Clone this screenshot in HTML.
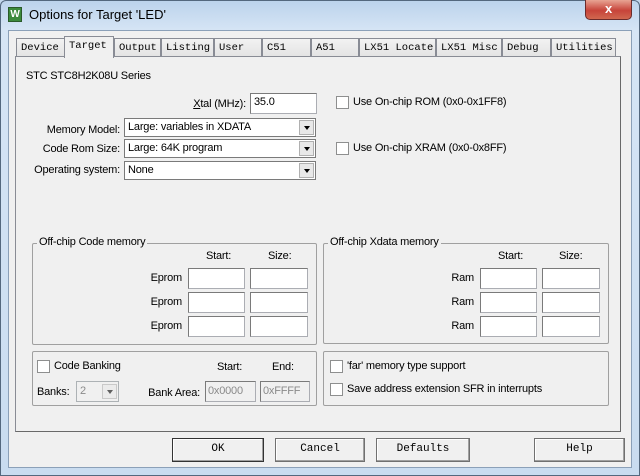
<!DOCTYPE html>
<html><head><meta charset="utf-8"><style>
*{box-sizing:border-box;margin:0;padding:0}
body{width:640px;height:476px;overflow:hidden;font-family:"Liberation Sans",Arial,sans-serif;font-size:11px;letter-spacing:-0.2px;color:#000;position:relative;background:#c4d8ee}
.a{position:absolute}
.frame{left:0;top:0;width:640px;height:476px;background:linear-gradient(#bcd3ec,#d6e5f5 30px,#c9dcf0);border:1px solid #54687e;border-radius:6px 6px 0 0}
.client{left:8px;top:30px;width:624px;height:438px;background:#f0f0f0;border:1px solid #8ba0b8}
.t{position:absolute;white-space:nowrap}
.r{position:absolute;white-space:nowrap;text-align:right}
.tab{position:absolute;top:38px;height:19px;border:1px solid #898c95;border-bottom:none;background:linear-gradient(#f2f2f2,#e3e3e3);font-family:"Liberation Mono",monospace;font-size:10.5px;letter-spacing:0;padding:3px 0 0 4px;white-space:nowrap;overflow:hidden}
.panel{left:15px;top:56px;width:606px;height:376px;border:1px solid #898c95;border-right-color:#696969;border-bottom-color:#696969;background:#f0f0f0}
.in{position:absolute;background:#fff;border:1px solid #abadb3;border-top-color:#7a7a7a;border-left-color:#7a7a7a;height:21px}
.sel{position:absolute;background:#fff;border:1px solid #7a7a7a;height:19px;padding:2px 0 0 3px}
.sel .b{position:absolute;right:1px;top:1px;width:15px;height:15px;background:#e8e8e8;border:1px solid #b0b0b0}
.sel .b:after{content:"";position:absolute;left:4px;top:5px;border-left:3px solid transparent;border-right:3px solid transparent;border-top:4px solid #000}
.cb{position:absolute;width:13px;height:13px;border:1px solid #8e8f8f;background:#fff}
.grp{position:absolute;border:1px solid #a0a0a0;border-radius:2px}
.gt{position:absolute;background:#f0f0f0;padding:0 2px;top:-8px;left:4px;white-space:nowrap}
.btn{position:absolute;top:438px;height:24px;border:1px solid #707070;box-shadow:inset -1px -1px 0 #a0a0a0,inset 1px 1px 0 #fff;background:#f0f0f0;font-family:"Liberation Mono",monospace;font-size:11px;letter-spacing:0;text-align:center;line-height:21px}
</style></head><body>
<div class="a frame"></div>
<div class="a" style="left:585px;top:0;width:47px;height:20px;border:1px solid #6a2b2b;border-top:none;border-radius:0 0 5px 5px;background:linear-gradient(#e8a493,#c7443a 55%,#d0674f);color:#fff;font-weight:bold;text-align:center;font-size:13px;line-height:17px">x</div>
<div class="a" style="left:8px;top:7px;width:14px;height:15px;background:#3c8a3c;border:1px solid #2a5a2a;color:#fff;font-size:10px;font-weight:bold;line-height:13px;text-align:center">W</div>
<div class="t" style="left:29px;top:7px;font-size:13px;letter-spacing:0">Options for Target 'LED'</div>
<div class="a client"></div>

<div class="tab" style="left:16px;width:49px">Device</div>
<div class="tab" style="left:114px;width:47px">Output</div>
<div class="tab" style="left:161px;width:53px">Listing</div>
<div class="tab" style="left:214px;width:48px">User</div>
<div class="tab" style="left:262px;width:49px">C51</div>
<div class="tab" style="left:311px;width:48px">A51</div>
<div class="tab" style="left:359px;width:77px">LX51 Locate</div>
<div class="tab" style="left:436px;width:66px">LX51 Misc</div>
<div class="tab" style="left:502px;width:49px">Debug</div>
<div class="tab" style="left:551px;width:65px">Utilities</div>
<div class="a panel"></div>
<div class="tab" style="left:64px;top:36px;width:50px;height:22px;background:#f0f0f0;z-index:2;padding-top:3px">Target</div>

<div class="t" style="left:26px;top:70px">STC STC8H2K08U Series</div>
<div class="r" style="right:394px;top:98px"><u>X</u>tal (MHz):</div>
<div class="in" style="left:250px;top:93px;width:67px;padding:2px 3px">35.0</div>
<div class="r" style="right:520px;top:124px">Memory Model:</div>
<div class="sel" style="left:124px;top:118px;width:192px">Large: variables in XDATA<div class="b"></div></div>
<div class="r" style="right:520px;top:143px">Code Rom Size:</div>
<div class="sel" style="left:124px;top:139px;width:192px">Large: 64K program<div class="b"></div></div>
<div class="r" style="right:520px;top:164px">Operating system:</div>
<div class="sel" style="left:124px;top:161px;width:192px">None<div class="b"></div></div>

<div class="cb" style="left:336px;top:96px"></div>
<div class="t" style="left:353px;top:96px">Use On-chip ROM (0x0-0x1FF8)</div>
<div class="cb" style="left:336px;top:142px"></div>
<div class="t" style="left:353px;top:142px">Use On-chip XRAM (0x0-0x8FF)</div>

<div class="grp" style="left:32px;top:243px;width:285px;height:102px"><div class="gt">Off-chip Code memory</div></div>
<div class="t" style="left:206px;top:250px">Start:</div>
<div class="t" style="left:268px;top:250px">Size:</div>
<div class="r" style="right:458px;top:272px">Eprom</div>
<div class="r" style="right:458px;top:296px">Eprom</div>
<div class="r" style="right:458px;top:320px">Eprom</div>
<div class="in" style="left:188px;top:268px;width:57px"></div>
<div class="in" style="left:250px;top:268px;width:58px"></div>
<div class="in" style="left:188px;top:292px;width:57px"></div>
<div class="in" style="left:250px;top:292px;width:58px"></div>
<div class="in" style="left:188px;top:316px;width:57px"></div>
<div class="in" style="left:250px;top:316px;width:58px"></div>

<div class="grp" style="left:323px;top:243px;width:286px;height:101px"><div class="gt">Off-chip Xdata memory</div></div>
<div class="t" style="left:498px;top:250px">Start:</div>
<div class="t" style="left:559px;top:250px">Size:</div>
<div class="r" style="right:166px;top:272px">Ram</div>
<div class="r" style="right:166px;top:296px">Ram</div>
<div class="r" style="right:166px;top:320px">Ram</div>
<div class="in" style="left:480px;top:268px;width:57px"></div>
<div class="in" style="left:542px;top:268px;width:58px"></div>
<div class="in" style="left:480px;top:292px;width:57px"></div>
<div class="in" style="left:542px;top:292px;width:58px"></div>
<div class="in" style="left:480px;top:316px;width:57px"></div>
<div class="in" style="left:542px;top:316px;width:58px"></div>

<div class="grp" style="left:32px;top:351px;width:285px;height:55px"></div>
<div class="cb" style="left:37px;top:360px"></div>
<div class="t" style="left:54px;top:360px">Code Banking</div>
<div class="t" style="left:217px;top:361px">Start:</div>
<div class="t" style="left:272px;top:361px">End:</div>
<div class="t" style="left:37px;top:386px">Banks:</div>
<div class="sel" style="left:76px;top:381px;width:43px;height:21px;background:#f0f0f0;border-color:#adb2b5;color:#8a8a8a;padding-top:3px">2<div class="b" style="top:2px;opacity:.6"></div></div>
<div class="r" style="right:440px;top:387px">Bank Area:</div>
<div class="in" style="left:205px;top:381px;width:51px;background:#f0f0f0;color:#8a8a8a;padding:3px 2px">0x0000</div>
<div class="in" style="left:260px;top:381px;width:50px;background:#f0f0f0;color:#8a8a8a;padding:3px 2px">0xFFFF</div>

<div class="grp" style="left:323px;top:351px;width:286px;height:55px"></div>
<div class="cb" style="left:330px;top:360px"></div>
<div class="t" style="left:347px;top:360px">'far' memory type support</div>
<div class="cb" style="left:330px;top:383px"></div>
<div class="t" style="left:347px;top:383px">Save address extension SFR in interrupts</div>

<div class="btn" style="left:172px;width:92px;border-color:#333">OK</div>
<div class="btn" style="left:275px;width:90px">Cancel</div>
<div class="btn" style="left:376px;width:94px">Defaults</div>
<div class="btn" style="left:534px;width:91px">Help</div>
</body></html>
